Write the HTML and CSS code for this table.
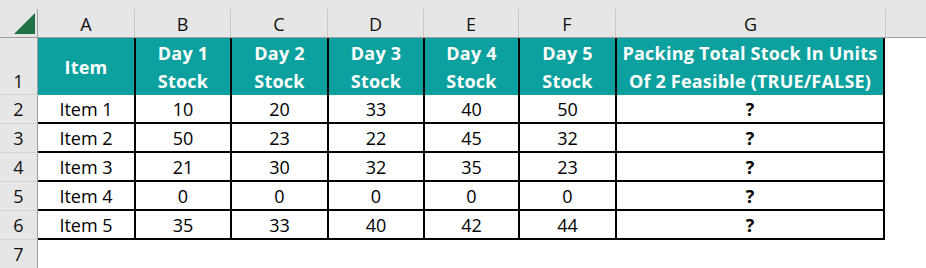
FILE: index.html
```html
<!DOCTYPE html>
<html>
<head>
<meta charset="utf-8">
<link rel="stylesheet" href="styles.css">
</head>
<body>
<div class="sheet">
  <div class="topbar"></div>

  <div class="corner">
    <svg class="tri" width="22" height="22" viewBox="0 0 22 22"><polygon points="21,0 21,21 0,21" fill="#217346"/></svg>
  </div>
  <div class="ch">A</div>
  <div class="ch">B</div>
  <div class="ch">C</div>
  <div class="ch">D</div>
  <div class="ch">E</div>
  <div class="ch">F</div>
  <div class="ch">G</div>
  <div class="ch ch-rest"></div>

  <div class="rh rh-1">1</div>
  <div class="hd first">Item</div>
  <div class="hd">Day 1<br>Stock</div>
  <div class="hd">Day 2<br>Stock</div>
  <div class="hd">Day 3<br>Stock</div>
  <div class="hd">Day 4<br>Stock</div>
  <div class="hd">Day 5<br>Stock</div>
  <div class="hd last">Packing Total Stock In Units<br>Of 2 Feasible (TRUE/FALSE)</div>
  <div class="blank"></div>

  <div class="rh">2</div>
  <div class="cell first">Item 1</div><div class="cell">10</div><div class="cell">20</div><div class="cell">33</div><div class="cell">40</div><div class="cell">50</div><div class="cell last q">?</div><div class="blank"></div>

  <div class="rh">3</div>
  <div class="cell first">Item 2</div><div class="cell">50</div><div class="cell">23</div><div class="cell">22</div><div class="cell">45</div><div class="cell">32</div><div class="cell last q">?</div><div class="blank"></div>

  <div class="rh">4</div>
  <div class="cell first">Item 3</div><div class="cell">21</div><div class="cell">30</div><div class="cell">32</div><div class="cell">35</div><div class="cell">23</div><div class="cell last q">?</div><div class="blank"></div>

  <div class="rh">5</div>
  <div class="cell first">Item 4</div><div class="cell">0</div><div class="cell">0</div><div class="cell">0</div><div class="cell">0</div><div class="cell">0</div><div class="cell last q">?</div><div class="blank"></div>

  <div class="rh">6</div>
  <div class="cell first">Item 5</div><div class="cell">35</div><div class="cell">33</div><div class="cell">40</div><div class="cell">42</div><div class="cell">44</div><div class="cell last q">?</div><div class="blank"></div>

  <div class="rh rh-last">7</div>
  <div class="empty"></div>
</div>
</body>
</html>
```

FILE: styles.css
```css
* { box-sizing: border-box; }
html, body { margin: 0; padding: 0; background: #ffffff; }
body { width: 926px; height: 268px; overflow: hidden; font-family: "Open Sans", "Noto Sans", sans-serif; }

.sheet {
  display: grid;
  grid-template-columns: 38px 96px 96px 97px 96px 95px 97px 270px 41px;
  grid-template-rows: 9px 29px 57px repeat(5, 29px) 28px;
  width: 926px;
  height: 268px;
}

.topbar { grid-column: 1 / -1; background: #e6e6e6; }

.corner {
  background: #e6e6e6;
  border-right: 1px solid #a0a0a0;
  border-bottom: 1px solid #a0a0a0;
  position: relative;
}
.tri { position: absolute; left: 14px; top: 4px; }

.ch {
  background: #e6e6e6;
  border-left: 1px solid #c8c8c8;
  border-bottom: 1px solid #a0a0a0;
  display: flex;
  align-items: center;
  justify-content: center;
  font-size: 18px;
  color: #111;
  padding-top: 2px;
}
.ch:nth-child(3) { border-left: none; }
.ch-rest { border-left: 1px solid #c8c8c8; }

.rh {
  background: #e6e6e6;
  border-right: 1px solid #a0a0a0;
  border-bottom: 1px solid #d2d2d2;
  display: flex;
  align-items: center;
  justify-content: center;
  font-size: 18px;
  color: #111;
}
.rh-1 { align-items: flex-end; padding-bottom: 1px; }
.rh-last { border-bottom: none; }

.hd {
  background: #0ca19e;
  color: #ffffff;
  font-weight: 700;
  font-size: 18px;
  line-height: 28px;
  text-align: center;
  display: flex;
  align-items: center;
  justify-content: center;
  border-left: 2px solid #000;
  padding-top: 1px;
  letter-spacing: 0.2px;
}
.hd.first { border-left: none; }
.hd.last { border-right: 2px solid #000; letter-spacing: 0.2px; }

.cell {
  display: flex;
  align-items: center;
  justify-content: center;
  font-size: 18px;
  color: #000;
  border-left: 2px solid #000;
  border-bottom: 2px solid #000;
  padding-top: 1px;
}
.cell.first { border-left: none; }
.cell.last { border-right: 2px solid #000; }
.cell.q { font-weight: 700; }

.blank { background: #fff; }
.empty { grid-column: 2 / -1; background: #fff; }
```
